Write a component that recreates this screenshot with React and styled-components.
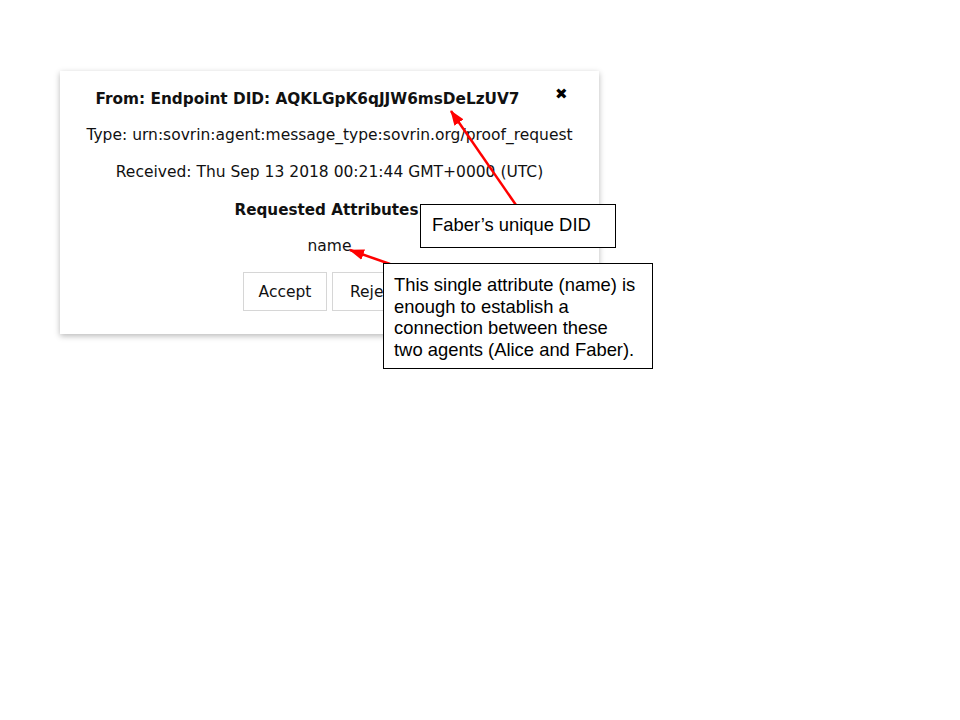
import React from "react";
import styled, { createGlobalStyle } from "styled-components";

const Global = createGlobalStyle`
  html, body { margin: 0; padding: 0; background: #fff; }
  #root { width: 960px; height: 720px; position: relative; overflow: hidden; }
`;

const Page = styled.div`
  position: relative;
  width: 960px;
  height: 720px;
  padding: 71px 0 0 60px;
  box-sizing: border-box;
  font-family: "DejaVu Sans", Verdana, sans-serif;
  color: #111;
`;

const Card = styled.div`
  width: 539px;
  box-sizing: border-box;
  background: #fff;
  box-shadow: 0 2px 6px rgba(0, 0, 0, 0.28);
  padding: 18px 0 23px;
  display: flex;
  flex-direction: column;
  align-items: center;
`;

const Header = styled.div`
  align-self: stretch;
  display: flex;
  align-items: flex-start;
`;

const Title = styled.h3`
  flex: 1;
  margin: 0;
  text-align: center;
  font-size: 15.3px;
  font-weight: bold;
  line-height: 20px;
`;

const Close = styled.button`
  width: 44px;
  border: 0;
  background: none;
  padding: 0;
  margin-top: -5px;
  font-size: 15px;
  font-weight: bold;
  line-height: 20px;
  color: #000;
  text-align: left;
  font-family: "DejaVu Sans", sans-serif;
`;

const Line = styled.p`
  margin: ${(p) => p.$top}px 0 0;
  font-size: ${(p) => (p.$bold ? "15.2px" : "15.5px")};
  line-height: 20px;
  font-weight: ${(p) => (p.$bold ? "bold" : "normal")};
  text-align: center;
`;

const Buttons = styled.div`
  display: flex;
  gap: 5px;
  margin-top: 16px;
`;

const Btn = styled.button`
  width: 84px;
  height: 39px;
  background: #fff;
  border: 1px solid #d6d6d6;
  font-family: "DejaVu Sans", Verdana, sans-serif;
  font-size: 15.5px;
  color: #111;
  padding: 0;
`;

const Callout = styled.div`
  position: absolute;
  left: ${(p) => p.$x}px;
  top: ${(p) => p.$y}px;
  width: ${(p) => p.$w}px;
  height: ${(p) => p.$h}px;
  box-sizing: border-box;
  border: 1px solid #000;
  background: #fff;
  padding: ${(p) => p.$pad};
  font-family: "Liberation Sans", Arial, sans-serif;
  font-size: 18.4px;
  line-height: 21.7px;
  color: #000;
`;

const Arrows = styled.svg`
  position: absolute;
  left: 0;
  top: 0;
  pointer-events: none;
`;

export default function App() {
  return (
    <>
      <Global />
      <Page>
        <Card>
          <Header>
            <Title>From: Endpoint DID: AQKLGpK6qJJW6msDeLzUV7</Title>
            <Close aria-label="close">✖</Close>
          </Header>
          <Line $top={16}>Type: urn:sovrin:agent:message_type:sovrin.org/proof_request</Line>
          <Line $top={17}>Received: Thu Sep 13 2018 00:21:44 GMT+0000 (UTC)</Line>
          <Line $top={18} $bold>Requested Attributes:</Line>
          <Line $top={16}>name</Line>
          <Buttons>
            <Btn>Accept</Btn>
            <Btn>Reject</Btn>
          </Buttons>
        </Card>

        <Arrows width="960" height="720" viewBox="0 0 960 720">
          <defs>
            <marker id="ah" markerWidth="15" markerHeight="11" refX="14" refY="5.5" orient="auto" markerUnits="userSpaceOnUse">
              <path d="M0 0 L15 5.5 L0 11 Z" fill="#ff0000" />
            </marker>
          </defs>
          <line x1="516" y1="205" x2="451" y2="111" stroke="#ff0000" strokeWidth="2.5" markerEnd="url(#ah)" />
          <line x1="390" y1="264" x2="350" y2="250" stroke="#ff0000" strokeWidth="2.5" markerEnd="url(#ah)" />
        </Arrows>

        <Callout $x={420} $y={204} $w={196} $h={44} $pad="9px 0 0 11px">Faber’s unique DID</Callout>
        <Callout $x={383} $y={263} $w={270} $h={106} $pad="10px 13px 0 10px">
          This single attribute (name) is enough to establish a connection between these two agents (Alice and Faber).
        </Callout>
      </Page>
    </>
  );
}
